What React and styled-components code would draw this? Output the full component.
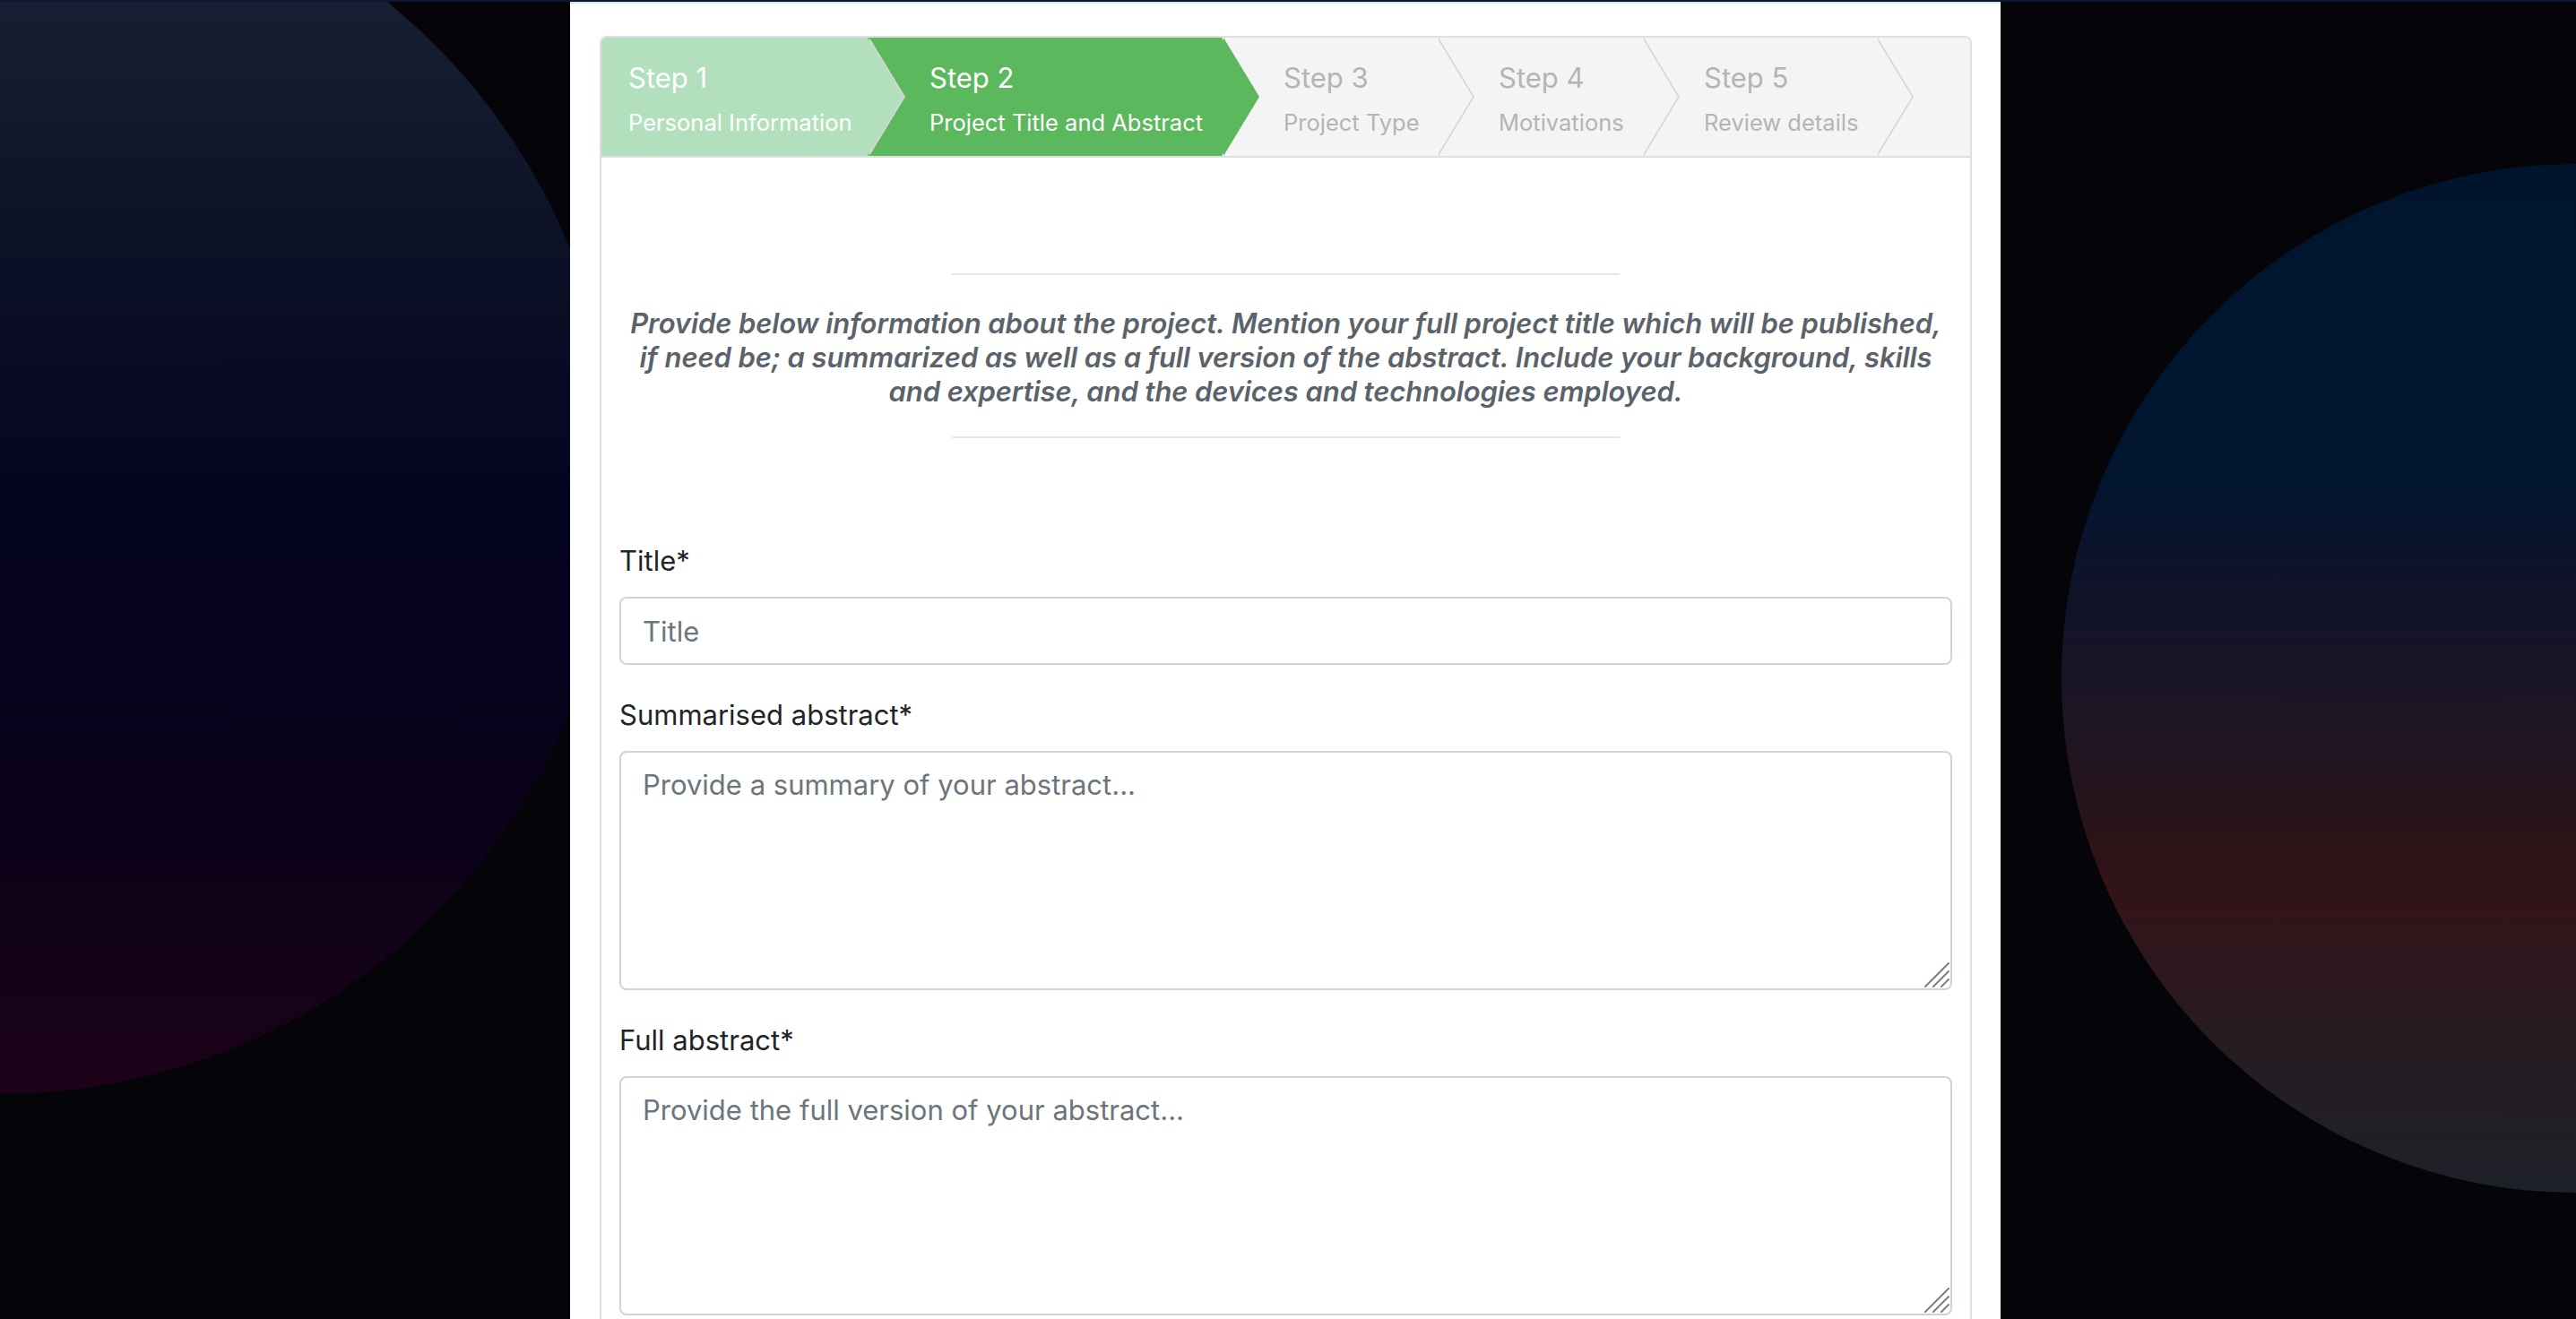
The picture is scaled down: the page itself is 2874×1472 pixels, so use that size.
import React from 'react';
import styled, { createGlobalStyle } from 'styled-components';

const GlobalStyle = createGlobalStyle`
  html, body {
    margin: 0;
    height: 100%;
    overflow: hidden;
    background: #050509;
    font-family: 'Inter', 'Noto Sans', sans-serif;
  }
  * { box-sizing: border-box; }
`;

const Backdrop = styled.div`
  position: fixed;
  inset: 0;
  z-index: 0;
  overflow: hidden;
`;

const Blob = styled.div`
  position: absolute;
  border-radius: 50%;
  left: ${p => p.$x}px;
  top: ${p => p.$y}px;
  width: ${p => p.$size}px;
  height: ${p => p.$size}px;
  background: ${p => p.$fill};
`;

const Page = styled.div`
  position: relative;
  z-index: 1;
  display: flex;
  justify-content: center;
  height: 100vh;
  border-top: 2px solid #0b1733;
  padding-right: 6px;
`;

const Panel = styled.main`
  width: 1596px;
  background: #fff;
  border-top: 2px solid #dee2e6;
  padding: 36px 32px 0 33px;
`;

const Card = styled.section`
  border: 2px solid #dfdfdf;
  border-bottom: none;
  border-radius: 8px 8px 0 0;
  overflow: hidden;
`;

const Stepper = styled.nav`
  display: flex;
  height: 134px;
  background: #f4f4f4;
  border-bottom: 2px solid #dfdfdf;
`;

const stepBg = { done: '#b2dfbc', active: '#5cb85c', todo: '#f4f4f4' };

const Step = styled.div`
  position: relative;
  flex: none;
  width: ${p => p.$w}px;
  height: 100%;
  padding: 26px 0 0 ${p => (p.$first ? 30 : 69)}px;
  background: ${p => stepBg[p.$state]};
  color: ${p => (p.$state === 'todo' ? '#b4b4b4' : '#fff')};
  white-space: nowrap;

  &::before,
  &::after {
    content: '';
    position: absolute;
    top: 0;
    left: 100%;
    width: 40px;
    height: 100%;
    clip-path: polygon(0 0, 100% 50%, 0 100%);
    z-index: 1;
  }
  &::before {
    background: ${p => (p.$state === 'active' ? stepBg.active : '#d6d6d6')};
    transform: translateX(2px);
  }
  &::after {
    background: ${p => stepBg[p.$state]};
  }
`;

const StepTitle = styled.div`
  font-size: 31px;
  line-height: 38px;
  font-weight: 400;
`;

const StepSub = styled.div`
  margin-top: 15px;
  font-size: 25.5px;
  line-height: 32px;
`;

const Body = styled.div`
  padding: 0 20px;
`;

const Intro = styled.div`
  padding: 129px 0 113px;
  display: flex;
  flex-direction: column;
  align-items: center;
`;

const Rule = styled.div`
  width: 745px;
  height: 2px;
  background: #e6e6e6;
`;

const Lead = styled.p`
  margin: 35px 0 31px;
  text-align: center;
  font-size: 31px;
  line-height: 38px;
  letter-spacing: -0.1px;
  font-style: italic;
  font-weight: 600;
  color: #5b626a;
  white-space: nowrap;
`;

const Group = styled.div`
  margin-bottom: 32px;
`;

const Label = styled.label`
  display: block;
  margin-bottom: 16px;
  font-size: 31px;
  line-height: 48px;
  color: #212529;
`;

const fieldCss = `
  display: block;
  width: 100%;
  padding: 12px 24px;
  font-family: inherit;
  font-size: 31px;
  line-height: 48px;
  color: #495057;
  background: #fff;
  border: 2px solid #ced4da;
  border-radius: 8px;
  outline: none;
  &::placeholder { color: #6c757d; }
`;

const Input = styled.input`
  ${fieldCss}
  height: 76px;
`;

const AreaWrap = styled.div`
  position: relative;
`;

const TextArea = styled.textarea`
  ${fieldCss}
  height: 267px;
  resize: none;
`;

const Grip = styled.svg`
  position: absolute;
  right: 3px;
  bottom: 3px;
  width: 28px;
  height: 28px;
  pointer-events: none;
`;

const steps = [
  { n: 1, sub: 'Personal Information', w: 297, state: 'done' },
  { n: 2, sub: 'Project Title and Abstract', w: 395, state: 'active' },
  { n: 3, sub: 'Project Type', w: 240, state: 'todo' },
  { n: 4, sub: 'Motivations', w: 229, state: 'todo' },
  { n: 5, sub: 'Review details', w: 261, state: 'todo' },
];

function ResizeGrip() {
  return (
    <Grip viewBox="0 0 28 28">
      <g stroke="#7d7d7d" strokeWidth="2" strokeLinecap="round">
        <line x1="1" y1="27" x2="27" y2="1" />
        <line x1="10" y1="27" x2="27" y2="10" />
        <line x1="19" y1="27" x2="27" y2="19" />
      </g>
    </Grip>
  );
}

export default function App() {
  return (
    <>
      <GlobalStyle />
      <Backdrop>
        <Blob
          $x={-686}
          $y={-151}
          $size={1372}
          $fill="linear-gradient(180deg, #1c2839 0%, #0d1227 30%, #03021f 55%, #0c0219 80%, #1c0218 100%)"
        />
        <Blob
          $x={2300}
          $y={183}
          $size={1148}
          $fill="linear-gradient(180deg, #00152d 0%, #001530 30%, #10132a 41%, #1d1524 54%, #2c1419 66%, #32141a 73%, #261c22 86%, #1e2129 100%)"
        />
      </Backdrop>
      <Page>
        <Panel>
          <Card>
            <Stepper>
              {steps.map((s, i) => (
                <Step key={s.n} $w={s.w} $state={s.state} $first={i === 0}>
                  <StepTitle>Step {s.n}</StepTitle>
                  <StepSub>{s.sub}</StepSub>
                </Step>
              ))}
            </Stepper>
            <Body>
              <Intro>
                <Rule />
                <Lead>
                  Provide below information about the project. Mention your full project title which will be published,
                  <br />
                  if need be; a summarized as well as a full version of the abstract. Include your background, skills
                  <br />
                  and expertise, and the devices and technologies employed.
                </Lead>
                <Rule />
              </Intro>
              <Group>
                <Label htmlFor="title">Title*</Label>
                <Input id="title" placeholder="Title" />
              </Group>
              <Group>
                <Label htmlFor="summary">Summarised abstract*</Label>
                <AreaWrap>
                  <TextArea id="summary" placeholder="Provide a summary of your abstract..." />
                  <ResizeGrip />
                </AreaWrap>
              </Group>
              <Group>
                <Label htmlFor="full">Full abstract*</Label>
                <AreaWrap>
                  <TextArea id="full" placeholder="Provide the full version of your abstract..." />
                  <ResizeGrip />
                </AreaWrap>
              </Group>
            </Body>
          </Card>
        </Panel>
      </Page>
    </>
  );
}
